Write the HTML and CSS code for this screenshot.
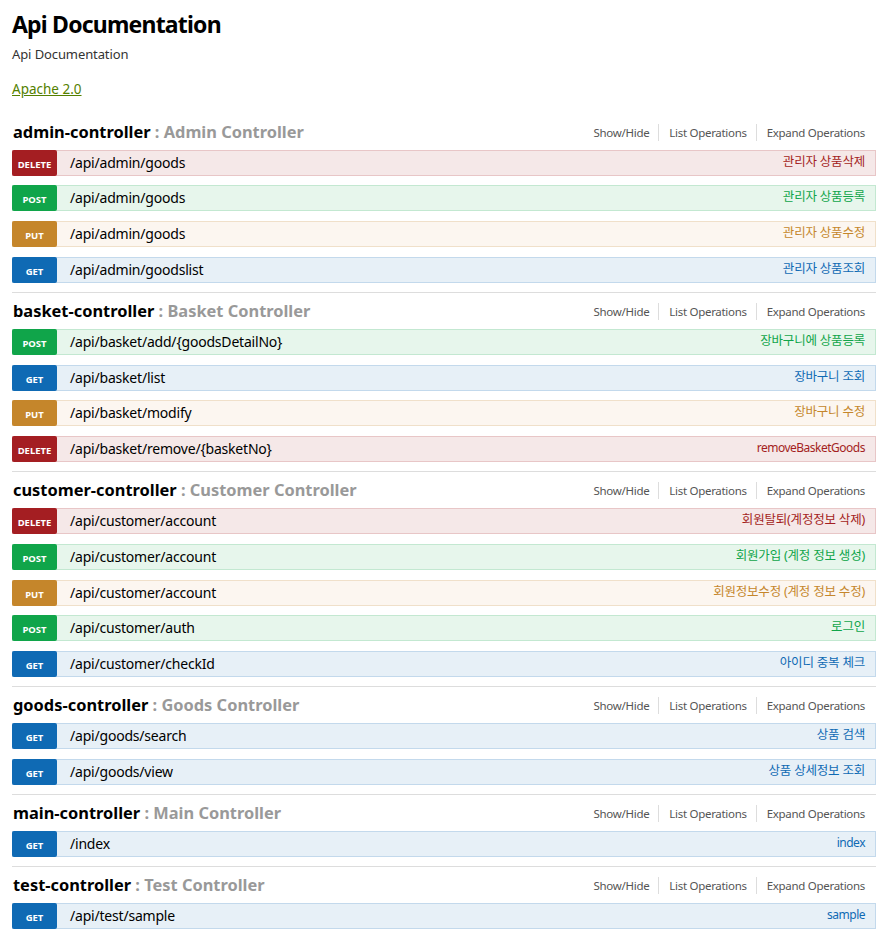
FILE: index.html
```html
<!DOCTYPE html>
<html>
<head>
<meta charset="utf-8">
<link rel="stylesheet" href="styles.css">
</head>
<body>
<div class="wrap">
  <div class="info">
    <div class="info-title">Api Documentation</div>
    <div class="info-desc">Api Documentation</div>
    <div class="info-license"><a href="#">Apache 2.0</a></div>
  </div>

  <div class="resource first">
    <div class="res-head">
      <h2><span class="res-name">admin-controller</span><span class="res-desc"> : Admin Controller</span></h2>
      <ul class="options"><li>Show/Hide</li><li>List Operations</li><li>Expand Operations</li></ul>
    </div>
    <div class="op delete"><span class="method">DELETE</span><span class="path">/api/admin/goods</span><span class="summary">관리자 상품삭제</span></div>
    <div class="op post"><span class="method">POST</span><span class="path">/api/admin/goods</span><span class="summary">관리자 상품등록</span></div>
    <div class="op put"><span class="method">PUT</span><span class="path">/api/admin/goods</span><span class="summary">관리자 상품수정</span></div>
    <div class="op get"><span class="method">GET</span><span class="path">/api/admin/goodslist</span><span class="summary">관리자 상품조회</span></div>
  </div>

  <div class="resource">
    <div class="res-head">
      <h2><span class="res-name">basket-controller</span><span class="res-desc"> : Basket Controller</span></h2>
      <ul class="options"><li>Show/Hide</li><li>List Operations</li><li>Expand Operations</li></ul>
    </div>
    <div class="op post"><span class="method">POST</span><span class="path">/api/basket/add/{goodsDetailNo}</span><span class="summary">장바구니에 상품등록</span></div>
    <div class="op get"><span class="method">GET</span><span class="path">/api/basket/list</span><span class="summary">장바구니 조회</span></div>
    <div class="op put"><span class="method">PUT</span><span class="path">/api/basket/modify</span><span class="summary">장바구니 수정</span></div>
    <div class="op delete"><span class="method">DELETE</span><span class="path">/api/basket/remove/{basketNo}</span><span class="summary latin">removeBasketGoods</span></div>
  </div>

  <div class="resource">
    <div class="res-head">
      <h2><span class="res-name">customer-controller</span><span class="res-desc"> : Customer Controller</span></h2>
      <ul class="options"><li>Show/Hide</li><li>List Operations</li><li>Expand Operations</li></ul>
    </div>
    <div class="op delete"><span class="method">DELETE</span><span class="path">/api/customer/account</span><span class="summary">회원탈퇴(계정정보 삭제)</span></div>
    <div class="op post"><span class="method">POST</span><span class="path">/api/customer/account</span><span class="summary">회원가입 (계정 정보 생성)</span></div>
    <div class="op put"><span class="method">PUT</span><span class="path">/api/customer/account</span><span class="summary">회원정보수정 (계정 정보 수정)</span></div>
    <div class="op post"><span class="method">POST</span><span class="path">/api/customer/auth</span><span class="summary">로그인</span></div>
    <div class="op get"><span class="method">GET</span><span class="path">/api/customer/checkId</span><span class="summary">아이디 중복 체크</span></div>
  </div>

  <div class="resource">
    <div class="res-head">
      <h2><span class="res-name">goods-controller</span><span class="res-desc"> : Goods Controller</span></h2>
      <ul class="options"><li>Show/Hide</li><li>List Operations</li><li>Expand Operations</li></ul>
    </div>
    <div class="op get"><span class="method">GET</span><span class="path">/api/goods/search</span><span class="summary">상품 검색</span></div>
    <div class="op get"><span class="method">GET</span><span class="path">/api/goods/view</span><span class="summary">상품 상세정보 조회</span></div>
  </div>

  <div class="resource">
    <div class="res-head">
      <h2><span class="res-name">main-controller</span><span class="res-desc"> : Main Controller</span></h2>
      <ul class="options"><li>Show/Hide</li><li>List Operations</li><li>Expand Operations</li></ul>
    </div>
    <div class="op get"><span class="method">GET</span><span class="path">/index</span><span class="summary latin">index</span></div>
  </div>

  <div class="resource">
    <div class="res-head">
      <h2><span class="res-name">test-controller</span><span class="res-desc"> : Test Controller</span></h2>
      <ul class="options"><li>Show/Hide</li><li>List Operations</li><li>Expand Operations</li></ul>
    </div>
    <div class="op get"><span class="method">GET</span><span class="path">/api/test/sample</span><span class="summary latin">sample</span></div>
  </div>
</div>
</body>
</html>
```
FILE: styles.css
```css
html, body {
  margin: 0;
  padding: 0;
  background: #fff;
}
body {
  font-family: "Noto Sans", "Open Sans", "Noto Sans CJK KR", sans-serif;
  color: #000;
}
.wrap {
  margin: 0 13px 0 12px;
}
.info {
  padding-top: 9px;
  height: 103.5px;
}
.info-title {
  font-size: 23px;
  line-height: 30px;
  font-weight: bold;
  letter-spacing: -0.8px;
}
.info-desc {
  font-size: 13px;
  line-height: 18px;
  margin-top: 6px;
  color: #333;
  letter-spacing: -0.1px;
}
.info-license {
  font-size: 13.5px;
  line-height: 18px;
  margin-top: 17px;
}
.info-license a {
  color: #547f00;
  text-decoration: underline;
}
.resource {
  border-top: 1px solid #ddd;
}
.resource.first {
  border-top: 1px solid transparent;
}
.res-head {
  display: flex;
  justify-content: space-between;
  align-items: flex-end;
  height: 28px;
  padding-bottom: 8px;
  box-sizing: content-box;
}
.res-head h2 {
  margin: 0 0 0 1px;
  font-size: 16.4px;
  line-height: 20px;
  font-weight: bold;
}
.res-name {
  color: #000;
}
.res-desc {
  color: #999;
}
.options {
  list-style: none;
  margin: 0 11px 1px 0;
  padding: 0;
  display: flex;
  font-size: 11.5px;
  line-height: 17px;
  color: #555;
}
.options li {
  padding: 0 9px 0 10px;
  border-right: 1px solid #ddd;
  letter-spacing: -0.3px;
}
.options li:first-child {
  padding-left: 0;
}
.options li:last-child {
  border-right: none;
  padding-right: 0;
}
.op {
  display: flex;
  align-items: stretch;
  height: 26px;
  box-sizing: border-box;
  border: 1px solid;
  margin-bottom: 9.75px;
}
.op:last-child {
  margin-bottom: 9px;
}
.method {
  margin: -1px 0 -1px -1px;
  width: 45px;
  flex: none;
  border-radius: 2px;
  color: #fff;
  font-size: 9.5px;
  font-weight: bold;
  display: flex;
  align-items: center;
  justify-content: center;
  padding-top: 3px;
  box-sizing: border-box;
}
.path {
  padding-left: 13px;
  font-size: 14px;
  line-height: 24px;
  color: #000;
  letter-spacing: -0.2px;
}
.summary {
  margin-left: auto;
  padding-right: 10px;
  font-size: 12.5px;
  line-height: 22px;
  font-family: "Noto Sans", "Noto Sans CJK KR", sans-serif;
  letter-spacing: -0.2px;
}
.summary.latin {
  font-size: 12px;
  letter-spacing: -0.5px;
}
.op.delete { background: #f5e8e8; border-color: #e8c6c7; }
.op.delete .method { background: #a41e22; }
.op.delete .summary { color: #a41e22; }
.op.post { background: #e7f6ec; border-color: #c3e8d1; }
.op.post .method { background: #10a54a; }
.op.post .summary { color: #10a54a; }
.op.put { background: #fcf6f0; border-color: #f0e0ca; }
.op.put .method { background: #c5862b; }
.op.put .summary { color: #c5862b; }
.op.get { background: #e7f0f7; border-color: #c3d9ec; }
.op.get .method { background: #0f6ab4; }
.op.get .summary { color: #0f6ab4; }
```
